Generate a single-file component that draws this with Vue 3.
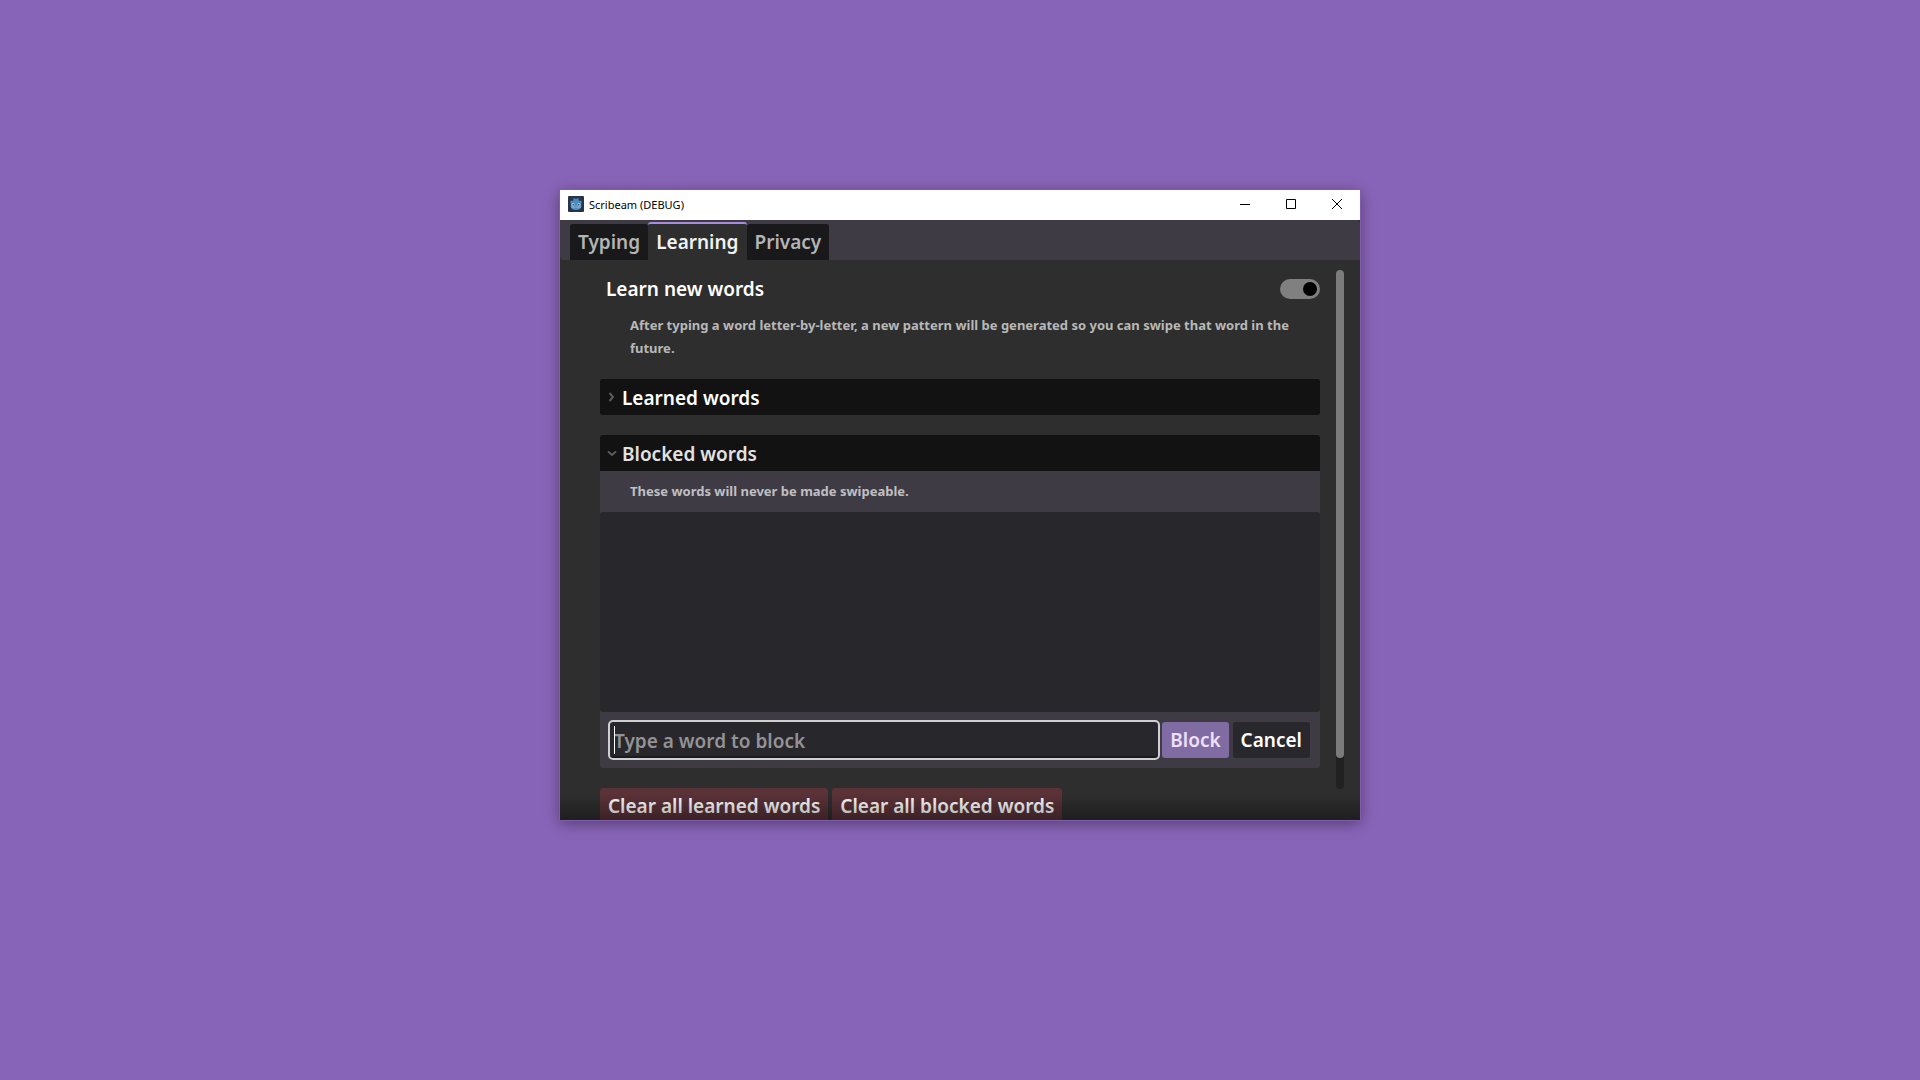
<script setup>
import { ref } from 'vue'

const tabs = ['Typing', 'Learning', 'Privacy']
const activeTab = ref('Learning')
const learnNewWords = ref(true)
const wordToBlock = ref('')
</script>

<template>
  <div class="desktop">
    <main class="window">
      <header class="titlebar">
        <svg class="app-icon" viewBox="0 0 16 16" aria-hidden="true">
          <rect width="16" height="16" rx="1" fill="#2b3348" />
          <path d="M2 6l1.500-1.500L5 5l.5-2.500 1.500-.6.600 1.400h.8L9 1.900l1.500.6.5 2.500 1.500-.5L14 6l-.8 1.500V11Q12 13.500 8 13.500T2.800 11V7.500z" fill="#478cbf" />
          <path d="M2.800 10.800Q4 14 8 14t5.200-3.200V10H2.800z" fill="#478cbf" />
          <circle cx="5.200" cy="8.700" r="1.700" fill="#b9d0df" />
          <circle cx="10.800" cy="8.700" r="1.700" fill="#b9d0df" />
          <circle cx="5.400" cy="8.700" r=".9" fill="#39485c" />
          <circle cx="10.600" cy="8.700" r=".9" fill="#39485c" />
          <path d="M3 11h2.500v1h1.500v-1h2v1h1.500v-1H13" fill="none" stroke="#9cc3dc" stroke-width=".6" />
        </svg>
        <h1 class="title">Scribeam (DEBUG)</h1>
        <button class="win-btn" type="button" aria-label="Minimize">
          <svg viewBox="0 0 10 10"><path d="M0 5.500h10" /></svg>
        </button>
        <button class="win-btn" type="button" aria-label="Maximize">
          <svg viewBox="0 0 10 10"><path d="M.5.5h9v9h-9z" /></svg>
        </button>
        <button class="win-btn" type="button" aria-label="Close">
          <svg viewBox="0 0 10 10"><path d="M0 0l10 10M10 0L0 10" /></svg>
        </button>
      </header>

      <nav class="tabs" role="tablist">
        <button
          v-for="tab in tabs"
          :key="tab"
          type="button"
          role="tab"
          class="tab"
          :class="{ active: tab === activeTab }"
          :aria-selected="tab === activeTab"
          @click="activeTab = tab"
        >{{ tab }}</button>
      </nav>

      <div class="body">
        <div class="content">
          <div class="setting">
            <label for="learn">Learn new words</label>
            <input id="learn" v-model="learnNewWords" class="switch" type="checkbox" />
          </div>
          <p class="hint">
            After typing a word letter-by-letter, a new pattern will be generated so you can swipe that word in the future.
          </p>

          <button class="fold closed" type="button" aria-expanded="false">
            <svg class="chevron" viewBox="0 0 12 12"><path d="M3.500 2L7 6l-3.500 4" /></svg>
            Learned words
          </button>

          <section class="group">
            <button class="fold open" type="button" aria-expanded="true">
              <svg class="chevron" viewBox="0 0 12 12"><path d="M2 4.500L6 8l4-3.500" /></svg>
              Blocked words
            </button>
            <p class="note">These words will never be made swipeable.</p>
            <div class="word-list"></div>
            <form class="entry" @submit.prevent>
              <div class="field">
                <input v-model="wordToBlock" class="word" type="text" placeholder="Type a word to block" aria-label="Word to block" />
                <span class="caret"></span>
              </div>
              <button class="btn primary" type="submit">Block</button>
              <button class="btn" type="button">Cancel</button>
            </form>
          </section>

          <div class="actions">
            <button class="btn danger" type="button">Clear all learned words</button>
            <button class="btn danger" type="button">Clear all blocked words</button>
          </div>
        </div>
        <div class="scrollbar"><div class="thumb"></div></div>
        <div class="fade"></div>
      </div>
    </main>
  </div>
</template>

<style>
body {
  margin: 0;
  background: #8864b8;
}
</style>

<style scoped>
* {
  box-sizing: border-box;
}
.desktop {
  min-height: 100vh;
  display: flex;
  align-items: center;
  justify-content: center;
  padding-bottom: 70px;
  background: #8864b8;
  color: #fff;
  font: 600 19px/36px "Noto Sans", "Open Sans", sans-serif;
}
.window {
  width: 100%;
  max-width: 800px;
  background: #2e2e2e;
  box-shadow: 0 0 0 1px #7f5cae, 0 3px 14px rgba(0, 0, 0, 0.42);
}
button,
input {
  font: inherit;
  color: inherit;
  margin: 0;
  border: 0;
}
.titlebar {
  display: flex;
  align-items: center;
  height: 30px;
  padding-left: 8px;
  background: #fff;
  color: #000;
}
.app-icon {
  width: 16px;
  height: 16px;
  margin-bottom: 2px;
}
.title {
  flex: 1;
  margin: 0 0 0 5px;
  font: 400 11px/16px "Noto Sans", "Open Sans", sans-serif;
}
.win-btn {
  display: flex;
  align-items: center;
  justify-content: center;
  width: 46px;
  height: 28px;
  padding: 0;
  align-self: flex-start;
  background: none;
}
.win-btn svg {
  width: 10px;
  height: 10px;
  overflow: visible;
  fill: none;
  stroke: #000;
}
.tabs {
  display: flex;
  align-items: flex-end;
  height: 40px;
  padding-left: 10px;
  background: #3e3b45;
  border-radius: 0 4px 0 4px;
}
.tab {
  height: 36px;
  padding: 0 8px;
  border-radius: 3px 3px 0 0;
  background: #19191b;
  color: #b4b4b4;
}
.tab.active {
  height: 38px;
  border-top: 2px solid #a98be0;
  background: #2e2e2e;
  color: #f2f2f2;
}
.body {
  position: relative;
  display: flex;
  gap: 16px;
  height: 560px;
  padding: 10px 16px 0 40px;
  overflow: hidden;
}
.content {
  flex: 1;
}
.setting {
  display: flex;
  align-items: center;
  justify-content: space-between;
  height: 38px;
  padding-left: 6px;
}
.switch {
  appearance: none;
  display: flex;
  justify-content: flex-end;
  width: 40px;
  height: 20px;
  padding: 3px;
  border-radius: 10px;
  background: #808080;
}
.switch::before {
  content: "";
  width: 14px;
  height: 14px;
  border-radius: 50%;
  background: #000;
}
.switch:not(:checked) {
  justify-content: flex-start;
}
.hint,
.note {
  font-size: 13px;
  font-weight: 700;
  line-height: 23px;
}
.hint {
  margin: 6px 20px 19px 30px;
  color: #b8b8b8;
}
.fold {
  display: flex;
  align-items: center;
  gap: 4px;
  width: 100%;
  height: 36px;
  padding: 2px 6px 0;
  background: #121212;
}
.closed {
  border-radius: 3px;
  margin-bottom: 20px;
}
.open {
  border-radius: 3px 3px 0 0;
  color: #e2e2e2;
}
.chevron {
  width: 12px;
  height: 12px;
  margin-bottom: 2px;
  fill: none;
  stroke: #5c5c5c;
  stroke-width: 2;
}
.group {
  background: #3e3b45;
  border-radius: 3px;
}
.note {
  margin: 0;
  padding: 9px 30px;
  color: #c0bfc2;
}
.word-list {
  height: 200px;
  border-radius: 3px;
  background: #28272c;
}
.entry {
  display: flex;
  gap: 4px;
  padding: 10px;
}
.field {
  position: relative;
  flex: 1;
}
.word {
  display: block;
  width: 100%;
  height: 36px;
  padding: 2px 4px 0;
  border-radius: 3px;
  outline: 2px solid #d0cfd1;
  background: #28272c;
  box-shadow: inset 0 -2px #1b1b1d;
}
.word::placeholder {
  color: #939395;
  opacity: 1;
}
.caret {
  position: absolute;
  left: 4px;
  top: 4px;
  width: 1px;
  height: 28px;
  background: #fff;
}
.btn {
  height: 36px;
  padding: 0 8px;
  border-radius: 3px;
  background: #28272c;
  white-space: nowrap;
}
.primary {
  background: #806ca2;
  color: #eee0ff;
}
.actions {
  display: flex;
  gap: 4px;
  margin-top: 20px;
}
.danger {
  background: #5a3238;
}
.scrollbar {
  width: 8px;
  height: 519px;
  border-radius: 4px;
  background: #212121;
}
.thumb {
  height: 94%;
  border-radius: 4px;
  background: #7b7b7b;
}
.fade {
  position: absolute;
  inset: auto 0 0;
  height: 26px;
  background: linear-gradient(transparent, rgba(0, 0, 0, 0.34));
  pointer-events: none;
}
</style>
